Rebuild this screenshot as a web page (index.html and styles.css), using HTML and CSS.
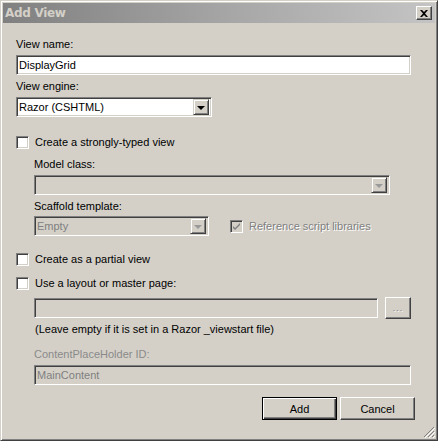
FILE: index.html
```html
<!DOCTYPE html>
<html>
<head>
<meta charset="utf-8">
<title>Add View</title>
<link rel="stylesheet" href="styles.css">
</head>
<body>
<div class="window">
  <div class="titlebar">
    <span class="title">Add View</span>
    <span class="close"><svg width="8" height="7" viewBox="0 0 8 7"><path d="M0 0h2l2 2 2-2h2L5 3.5 8 7H6L4 5 2 7H0l3-3.5z" fill="#000"/></svg></span>
  </div>
  <div class="content">
    <div class="label l-name">View name:</div>
    <div class="field wide"><span class="value">DisplayGrid</span></div>

    <div class="label l-engine">View engine:</div>
    <div class="field combo engine">
      <span class="value">Razor (CSHTML)</span>
      <span class="drop"><i class="tri"></i></span>
    </div>

    <label class="check c-typed"><span class="box"></span><span>Create a strongly-typed view</span></label>

    <div class="indent">
      <div class="label l-model">Model class:</div>
      <div class="field combo disabled model">
        <span class="value"></span>
        <span class="drop"><i class="tri off"></i></span>
      </div>

      <div class="label l-scaffold">Scaffold template:</div>
      <div class="scaffold-row">
        <div class="field combo disabled scaffold">
          <span class="value dim">Empty</span>
          <span class="drop"><i class="tri off"></i></span>
        </div>
        <label class="check ref"><span class="box disabled-box"><svg width="9" height="9" viewBox="0 0 9 9"><path d="M1 4l2 2 5-5v2L3 8 1 6z" fill="#808080"/></svg></span><span class="etched">Reference script libraries</span></label>
      </div>
    </div>

    <label class="check c-partial"><span class="box"></span><span>Create as a partial view</span></label>
    <label class="check c-layout"><span class="box"></span><span>Use a layout or master page:</span></label>

    <div class="indent">
      <div class="layout-row">
        <div class="field disabled layout"></div>
        <span class="btn dots"><span class="etched">...</span></span>
      </div>
      <div class="hint">(Leave empty if it is set in a Razor _viewstart file)</div>
      <div class="label grey l-cph">ContentPlaceHolder ID:</div>
      <div class="field disabled cph"><span class="value dim">MainContent</span></div>
    </div>

    <div class="actions">
      <span class="btn default">Add</span>
      <span class="btn">Cancel</span>
    </div>
  </div>
  <div class="grip">
    <svg width="12" height="12" viewBox="0 0 12 12">
      <path d="M11 1L1 11M11 5L5 11M11 9L9 11" stroke="#808080" stroke-width="1"/>
      <path d="M12 2L2 12M12 6L6 12M12 10L10 12" stroke="#fff" stroke-width="1"/>
    </svg>
  </div>
</div>
</body>
</html>
```

FILE: styles.css
```css
* { box-sizing: border-box; }

html, body {
  margin: 0;
  padding: 0;
  background: #d4d0c8;
}

body {
  font-family: "Liberation Sans", Arial, sans-serif;
  font-size: 11px;
  color: #000;
}

.window {
  position: relative;
  width: 438px;
  height: 441px;
  background: #d4d0c8;
  border: 1px solid;
  border-color: #d4d0c8 #404040 #404040 #d4d0c8;
  box-shadow: inset 1px 1px #fff, inset -1px -1px #808080;
  padding: 2px;
}

.titlebar {
  height: 20px;
  background: linear-gradient(to right, #808080 0%, #a8a8a8 55%, #c4c4c4 100%);
  display: flex;
  align-items: center;
  justify-content: space-between;
  padding: 0 3px 0 2px;
}

.title {
  font-weight: bold;
  color: #d4d0c8;
  font-size: 12px;
  font-family: "DejaVu Sans", "Liberation Sans", sans-serif;
  letter-spacing: -0.3px;
}

.close {
  width: 16px;
  height: 14px;
  background: #d4d0c8;
  border: 1px solid;
  border-color: #fff #404040 #404040 #fff;
  box-shadow: inset -1px -1px #808080;
  display: flex;
  align-items: center;
  justify-content: center;
}

.content {
  padding: 0 0 0 13px;
  display: flex;
  flex-direction: column;
  align-items: flex-start;
}

.label {
  line-height: 13px;
  height: 13px;
  margin-bottom: 4px;
}

.l-name { margin-top: 15px; }
.l-engine { margin-top: 5px; }
.l-model { margin-top: 9px; margin-bottom: 4px; }
.l-scaffold { margin-top: 5px; margin-bottom: 3px; }
.l-cph { margin-top: 12px; }
.grey { color: #8a8a8a; }

.field {
  height: 20px;
  background: #fff;
  border: 1px solid;
  border-color: #808080 #fff #fff #808080;
  box-shadow: inset 1px 1px #404040, inset -1px -1px #d4d0c8;
  display: flex;
  align-items: center;
  padding: 0 2px 0 2px;
  position: relative;
}

.field.disabled { background: #d4d0c8; }

.value {
  flex: 1;
  line-height: 14px;
}

.value.dim { color: #808080; }

.wide { width: 395px; }
.engine { width: 196px; }
.model { width: 356px; }
.scaffold { width: 175px; }
.layout { width: 344px; }
.cph { width: 377px; }

.combo { padding-right: 2px; }

.drop {
  width: 16px;
  height: 16px;
  background: #d4d0c8;
  border: 1px solid;
  border-color: #d4d0c8 #404040 #404040 #d4d0c8;
  box-shadow: inset 1px 1px #fff, inset -1px -1px #808080;
  display: flex;
  align-items: center;
  justify-content: center;
}

.tri {
  width: 0;
  height: 0;
  border-left: 4px solid transparent;
  border-right: 4px solid transparent;
  border-top: 4px solid #000;
  margin-top: 1px;
}

.tri.off { border-top-color: #9a9a9a; }

.check {
  display: flex;
  align-items: center;
  gap: 6px;
  line-height: 13px;
}

.box {
  width: 13px;
  height: 13px;
  background: #fff;
  border: 1px solid;
  border-color: #808080 #fff #fff #808080;
  box-shadow: inset 1px 1px #404040, inset -1px -1px #d4d0c8;
  display: flex;
  align-items: center;
  justify-content: center;
}

.box.disabled-box { background: #d4d0c8; }

.c-typed { margin-top: 19px; }
.c-partial { margin-top: 17px; }
.c-layout { margin-top: 11px; }

.indent {
  padding-left: 18px;
  display: flex;
  flex-direction: column;
  align-items: flex-start;
}

.scaffold-row {
  display: flex;
  align-items: center;
  gap: 21px;
}

.ref { gap: 6px; }

.etched {
  color: #808080;
  text-shadow: 1px 1px 0 #fff;
}

.layout-row {
  display: flex;
  align-items: center;
  gap: 7px;
  margin-top: 7px;
}

.hint {
  line-height: 13px;
  margin-top: 4px;
  padding-left: 1px;
}

.btn {
  height: 23px;
  background: #d4d0c8;
  border: 1px solid;
  border-color: #fff #404040 #404040 #fff;
  box-shadow: inset -1px -1px #808080;
  display: flex;
  align-items: center;
  justify-content: center;
  width: 75px;
}

.btn.dots {
  width: 26px;
  height: 22px;
  font-size: 9px;
  letter-spacing: 1px;
}

.btn.default {
  border: 1px solid #000;
  box-shadow: inset 1px 1px #fff, inset -1px -1px #404040, inset -2px -2px #808080;
}

.actions {
  display: flex;
  gap: 3px;
  align-self: flex-end;
  margin-top: 12px;
  margin-right: 20px;
}

.grip {
  position: absolute;
  right: 2px;
  bottom: 2px;
  width: 12px;
  height: 12px;
  line-height: 0;
}
```
